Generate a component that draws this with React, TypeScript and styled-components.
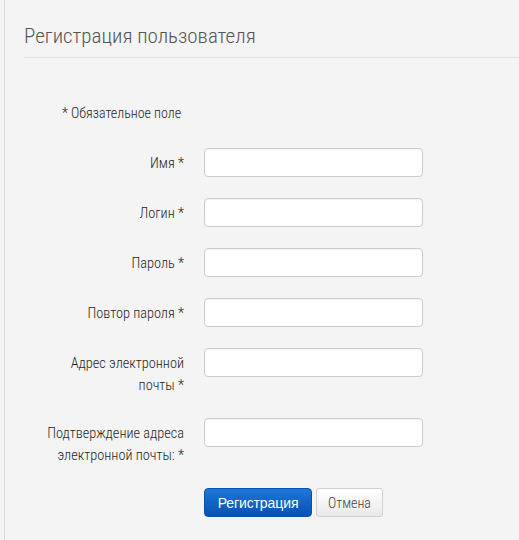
import styled, { createGlobalStyle } from "styled-components";

const GlobalStyle = createGlobalStyle`
  html, body {
    margin: 0;
    padding: 0;
    background: #f4f4f4;
  }
  body {
    font-family: "Roboto Condensed", Roboto, "Noto Sans", sans-serif;
    color: #333;
  }
`;

interface Field {
  id: string;
  label: string[];
  type: string;
}

const fields: Field[] = [
  { id: "name", label: ["Имя *"], type: "text" },
  { id: "login", label: ["Логин *"], type: "text" },
  { id: "password", label: ["Пароль *"], type: "password" },
  { id: "password2", label: ["Повтор пароля *"], type: "password" },
  { id: "email", label: ["Адрес электронной", "почты *"], type: "email" },
  {
    id: "email2",
    label: ["Подтверждение адреса", "электронной почты: *"],
    type: "email",
  },
];

export default function App() {
  return (
    <>
      <GlobalStyle />
      <Page>
        <Content>
          <Title>Регистрация пользователя</Title>
          <Form onSubmit={(e) => e.preventDefault()}>
            <Note>* Обязательное поле</Note>
            {fields.map((f) => (
              <Row key={f.id}>
                <Label htmlFor={f.id}>
                  {f.label.map((line) => (
                    <span key={line}>{line}</span>
                  ))}
                </Label>
                <Input id={f.id} type={f.type} />
              </Row>
            ))}
            <Actions>
              <PrimaryButton type="submit">Регистрация</PrimaryButton>
              <CancelButton type="button">Отмена</CancelButton>
            </Actions>
          </Form>
        </Content>
      </Page>
    </>
  );
}

const Page = styled.div`
  margin-left: 4px;
  min-height: 540px;
  border-left: 1px solid #dcdcdc;
`;

const Content = styled.div`
  padding: 24px 0 0 19px;
`;

const Title = styled.h1`
  margin: 0;
  padding-bottom: 9px;
  font-family: "Roboto Condensed", Roboto, sans-serif;
  font-size: 21px;
  line-height: 24px;
  font-weight: 300;
  color: #555;
  border-bottom: 1px solid #e2e2e2;
`;

const Form = styled.form`
  padding-top: 45px;
`;

const Note = styled.div`
  padding-left: 38px;
  font-size: 14px;
  font-weight: 300;
  line-height: 20px;
  color: #1e1e1e;
  margin-bottom: 25px;
`;

const Row = styled.div`
  display: grid;
  grid-template-columns: 160px 219px;
  column-gap: 20px;
  align-items: start;
  margin-bottom: 21px;
`;

const Label = styled.label`
  display: flex;
  flex-direction: column;
  align-items: flex-end;
  padding: 4px 0 1px;
  font-size: 14.3px;
  font-weight: 300;
  line-height: 22px;
  color: #1e1e1e;
  text-align: right;
`;

const Input = styled.input`
  box-sizing: border-box;
  height: 29px;
  width: 100%;
  margin: 0;
  padding: 4px 8px;
  background: #fff;
  border: 1px solid #ccc;
  border-radius: 4px;
  box-shadow: inset 0 1px 1px rgba(0, 0, 0, 0.05);
  font-family: inherit;
  font-size: 14px;
  outline: none;
`;

const Actions = styled.div`
  display: flex;
  gap: 4px;
  padding-left: 180px;
`;

const PrimaryButton = styled.button`
  height: 29px;
  width: 108px;
  padding: 0;
  border: 1px solid #0a4fa8;
  border-radius: 4px;
  background: linear-gradient(#1d78da, #0650b2);
  color: #fff;
  font-family: "Liberation Sans", Arial, sans-serif;
  font-size: 14px;
  letter-spacing: -0.1px;
  cursor: pointer;
`;

const CancelButton = styled.button`
  height: 29px;
  width: 67px;
  padding: 0;
  border: 1px solid #d0d0d0;
  border-radius: 3px;
  background: linear-gradient(#ffffff, #e9e9e9);
  color: #444;
  font-family: "Roboto Condensed", Roboto, sans-serif;
  font-size: 14px;
  font-weight: 300;
  cursor: pointer;
`;
